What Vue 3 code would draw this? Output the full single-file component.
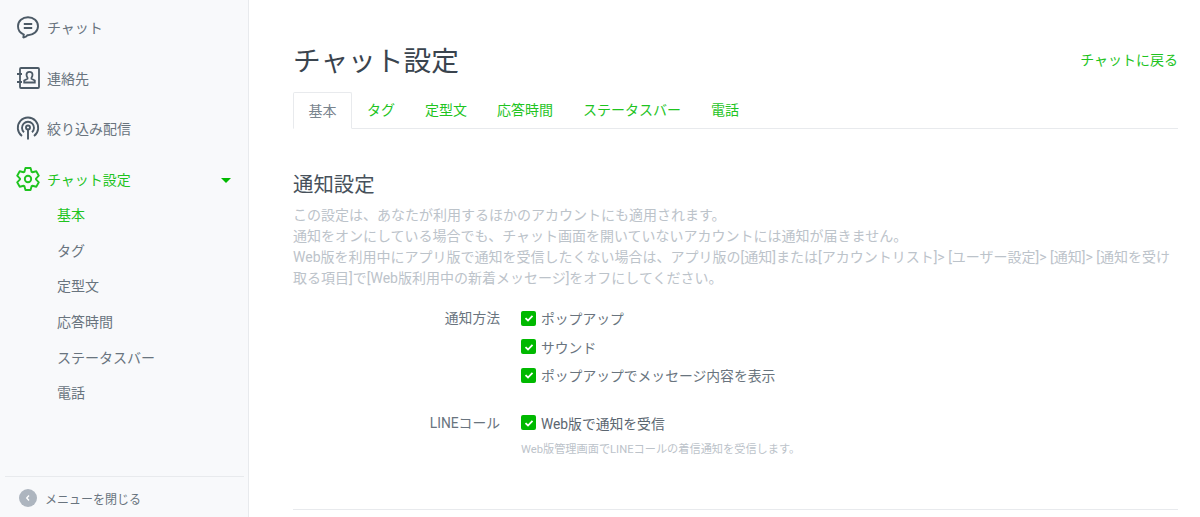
<script setup>
const subItems = ['基本', 'タグ', '定型文', '応答時間', 'ステータスバー', '電話'];
const methods = ['ポップアップ', 'サウンド', 'ポップアップでメッセージ内容を表示'];

// 6枚歯の歯車アイコン
const gearPath = (() => {
  const pts = [];
  for (let i = 0; i < 6; i++) {
    const a = -90 + i * 60;
    [[-27, 8], [-13, 11.3], [13, 11.3], [27, 8]].forEach(([d, r]) => {
      const rad = ((a + d) * Math.PI) / 180;
      pts.push(`${(12 + r * Math.cos(rad)).toFixed(2)} ${(12 + r * Math.sin(rad)).toFixed(2)}`);
    });
  }
  return `M${pts.join('L')}Z`;
})();
</script>

<template>
  <div class="layout">
    <aside class="sidebar">
      <nav class="nav">
        <a class="nav-item">
          <svg class="nav-icon" viewBox="0 0 24 24" fill="none" stroke="#4c5a66" stroke-width="1.9">
            <path d="M12 2.200c5.600 0 10 3.900 10 9 0 5-4.400 9-10 9h-.6c-.5.8-2 1.700-3.400 2.200-.6.200-.9-.1-.7-.6l.5-2.300C4.300 18 2 15 2 11.200c0-5.100 4.400-9 10-9z" />
            <path d="M7.800 9h8.400M7.800 13h8.400" />
          </svg>
          <span>チャット</span>
        </a>
        <a class="nav-item">
          <svg class="nav-icon" viewBox="0 0 24 24" fill="none" stroke="#4c5a66" stroke-width="1.8">
            <rect x="4" y="2" width="19" height="20" rx="1" />
            <path d="M1 8h5M1 16h5" />
            <path d="M13.500 5.800c-2 0-3 1.400-3 3 0 1.300.5 2.200 1 2.900v1.100l-3.300 1.700v2h10.600v-2l-3.300-1.700v-1.100c.5-.7 1-1.600 1-2.900 0-1.600-1-3-3-3z" />
          </svg>
          <span>連絡先</span>
        </a>
        <a class="nav-item">
          <svg class="nav-icon" viewBox="0 0 24 24" fill="none" stroke="#4c5a66" stroke-width="1.9">
            <path d="M6 20A10.200 10.200 0 1 1 18 20" />
            <path d="M8 16.200a6 6 0 1 1 8 0" />
            <circle cx="12" cy="11.500" r="2" />
            <path d="M12 13v10.500" />
          </svg>
          <span>絞り込み配信</span>
        </a>
        <a class="nav-item active">
          <svg class="nav-icon" viewBox="0 0 24 24" fill="none" stroke="#1fc41f" stroke-width="1.9" stroke-linejoin="round">
            <path :d="gearPath" />
            <circle cx="12" cy="12" r="3.200" />
          </svg>
          <span>チャット設定</span>
          <i class="caret"></i>
        </a>
      </nav>
      <ul class="sub-nav">
        <li v-for="(item, i) in subItems" :key="item" :class="{ current: i === 0 }">{{ item }}</li>
      </ul>
      <div class="sidebar-footer">
        <span class="close-btn">
          <svg viewBox="0 0 18 18" width="18" height="18">
            <circle cx="9" cy="9" r="9" fill="#adb5bf" />
            <path d="M10 6.500 7.700 9l2.300 2.500" fill="none" stroke="#fff" stroke-width="1.300" />
          </svg>
        </span>
        <span>メニューを閉じる</span>
      </div>
    </aside>

    <main class="content">
      <header class="page-head">
        <h1>チャット設定</h1>
        <a class="back-link">チャットに戻る</a>
      </header>
      <ul class="tabs">
        <li class="tab selected">基本</li>
        <li class="tab">タグ</li>
        <li class="tab">定型文</li>
        <li class="tab">応答時間</li>
        <li class="tab">ステータスバー</li>
        <li class="tab">電話</li>
      </ul>

      <section class="section">
        <h2>通知設定</h2>
        <p class="desc">
          この設定は、あなたが利用するほかのアカウントにも適用されます。<br />
          通知をオンにしている場合でも、チャット画面を開いていないアカウントには通知が届きません。<br />
          Web版を利用中にアプリ版で通知を受信したくない場合は、アプリ版の[通知]または[アカウントリスト]&gt; [ユーザー設定]&gt; [通知]&gt; [通知を受け取る項目]で[Web版利用中の新着メッセージ]をオフにしてください。
        </p>

        <div class="form-row">
          <div class="form-label">通知方法</div>
          <div class="form-field">
            <label v-for="m in methods" :key="m" class="check">
              <span class="box">
                <svg viewBox="0 0 10 10" width="10" height="10"><path d="M1.500 5.200 4 7.500 8.500 2.800" fill="none" stroke="#fff" stroke-width="1.800" /></svg>
              </span>
              {{ m }}
            </label>
          </div>
        </div>

        <div class="form-row second">
          <div class="form-label">LINEコール</div>
          <div class="form-field">
            <label class="check dark">
              <span class="box">
                <svg viewBox="0 0 10 10" width="10" height="10"><path d="M1.500 5.200 4 7.500 8.500 2.800" fill="none" stroke="#fff" stroke-width="1.800" /></svg>
              </span>
              Web版で通知を受信
            </label>
            <p class="hint">Web版管理画面でLINEコールの着信通知を受信します。</p>
          </div>
        </div>
      </section>
      <hr class="rule" />
    </main>
  </div>
</template>

<style scoped>
.layout {
  display: flex;
  height: 517px;
  overflow: hidden;
  font-family: Roboto, "Noto Sans CJK JP", sans-serif;
  font-size: 14px;
  color: #69747e;
}

.sidebar {
  width: 249px;
  flex-shrink: 0;
  box-sizing: border-box;
  display: flex;
  flex-direction: column;
  background: #f8f9fb;
  border-right: 1px solid #e8eaed;
}

.nav {
  padding-top: 1.500px;
}

.nav-item {
  display: flex;
  align-items: center;
  height: 50.700px;
  padding-left: 16px;
  position: relative;
}

.nav-icon {
  width: 24px;
  height: 24px;
  margin-right: 7px;
}

.nav-item.active {
  color: #1fc41f;
}

.caret {
  position: absolute;
  left: 221px;
  top: 24px;
  border-left: 5px solid transparent;
  border-right: 5px solid transparent;
  border-top: 5px solid #00b900;
}

.sub-nav {
  list-style: none;
  margin: -6.100px 0 0;
  padding: 0 0 0 57px;
}

.sub-nav li {
  height: 35.600px;
  line-height: 35.600px;
}

.sub-nav li.current {
  color: #1fc41f;
}

.sidebar-footer {
  margin: auto 4px 0 5px;
  height: 41px;
  box-sizing: border-box;
  padding: 2px 0 0 14px;
  border-top: 1px solid #e8eaed;
  display: flex;
  align-items: center;
  gap: 8px;
  font-size: 12px;
}

.close-btn {
  display: flex;
}

.content {
  flex: 1;
  padding: 0 22px 0 44px;
  min-width: 0;
}

.page-head {
  display: flex;
  justify-content: space-between;
  align-items: center;
  height: 92px;
  padding-top: 28px;
  box-sizing: border-box;
}

h1 {
  margin: -3px 0 0;
  font-size: 27.700px;
  font-weight: 400;
  color: #3a444e;
}

.back-link {
  color: #1fc41f;
  position: relative;
  top: -1px;
}

.tabs {
  list-style: none;
  margin: 0;
  padding: 0;
  display: flex;
  height: 36px;
  border-bottom: 1px solid #e8eaed;
}

.tab {
  padding: 0 15px;
  line-height: 36px;
  color: #1fc41f;
}

.tab.selected {
  height: 37px;
  box-sizing: border-box;
  padding: 0 14.500px;
  border: 1px solid #e8eaed;
  border-bottom: 1px solid #fff;
  border-radius: 2px 2px 0 0;
  color: #79848e;
  background: #fff;
}

.section {
  padding-top: 41px;
}

h2 {
  margin: 0 0 5px;
  font-size: 20.400px;
  font-weight: 400;
  line-height: 30px;
  color: #47515b;
}

.desc {
  margin: 0 0 15px;
  line-height: 21px;
  color: #bcc3ca;
}

.form-row {
  display: flex;
}

.form-row.second {
  margin-top: 19px;
}

.form-label {
  width: 207px;
  text-align: right;
  line-height: 29px;
  flex-shrink: 0;
  font-size: 13.800px;
}

.form-field {
  margin-left: 21px;
}

.check {
  display: flex;
  align-items: center;
  height: 28.500px;
  gap: 5px;
  font-size: 13.800px;
}

.check.dark {
  color: #5b6670;
}

.box {
  width: 15px;
  height: 15px;
  border-radius: 2px;
  background: #00b900;
  display: flex;
  align-items: center;
  justify-content: center;
}

.hint {
  margin: 2px 0 0;
  font-size: 11.200px;
  line-height: 22px;
  color: #bcc3ca;
}

.rule {
  margin: 48px 0 0;
  border: 0;
  border-top: 1px solid #e8eaed;
}
</style>

<style>
body {
  background: #fff;
}
</style>
